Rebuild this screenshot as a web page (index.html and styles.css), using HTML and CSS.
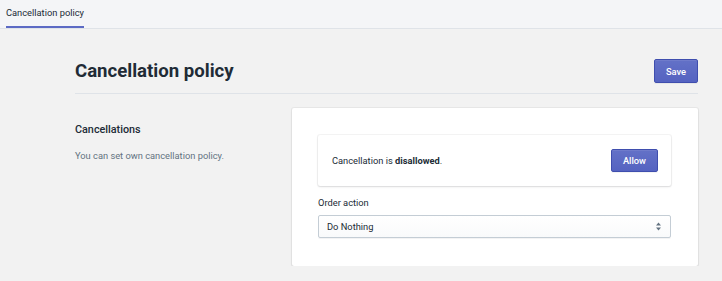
FILE: index.html
```html
<!DOCTYPE html>
<html lang="en">
<head>
    <meta charset="UTF-8">
    <title>Cancellation policy</title>
    <link rel="stylesheet" href="styles.css">
</head>
<body>
    <!-- Tabs -->
    <div class="tabs">
        <div class="tab active">Cancellation policy</div>
    </div>

    <div class="page">
        <!-- Page header -->
        <div class="page-header">
            <h1>Cancellation policy</h1>
            <button class="btn btn-primary">Save</button>
        </div>

        <!-- Annotated section -->
        <div class="section">
            <div class="annotation">
                <h2>Cancellations</h2>
                <p>You can set own cancellation policy.</p>
            </div>

            <div class="card">
                <div class="setting-toggle">
                    <span>Cancellation is <b>disallowed</b>.</span>
                    <button class="btn btn-primary">Allow</button>
                </div>

                <label class="field-label" for="action">Order action</label>
                <div class="select-wrap">
                    <select id="action">
                        <option>Do Nothing</option>
                    </select>
                    <svg class="select-arrows" width="7" height="9" viewBox="0 0 7 9">
                        <path d="M3.5 0.5 L6 3.5 H1 Z M3.5 8.5 L6 5.5 H1 Z" fill="#637381"/>
                    </svg>
                </div>
            </div>
        </div>
    </div>
</body>
</html>
```

FILE: styles.css
```css
* {
    margin: 0;
    padding: 0;
    box-sizing: border-box;
}

body {
    font-family: Roboto, "Noto Sans", sans-serif;
    background: #f2f2f2;
    color: #212b36;
    font-size: 9.3px;
}

/* Tabs */
.tabs {
    height: 29px;
    background: #f4f5f7;
    border-bottom: 1px solid #dfe3e8;
    padding-left: 6px;
    display: flex;
}

.tab {
    height: 28px;
    line-height: 25px;
    color: #212b36;
    border-bottom: 2px solid transparent;
}

.tab.active {
    border-bottom-color: #5c6ac4;
}

/* Page */
.page {
    padding: 30px 24px 0 75px;
}

.page-header {
    display: flex;
    justify-content: space-between;
    align-items: center;
    padding-bottom: 10px;
    border-bottom: 1px solid #dfe3e8;
}

.page-header h1 {
    font-size: 18.6px;
    font-weight: 700;
    line-height: 24px;
}

/* Buttons */
.btn {
    font-family: inherit;
    font-size: 9.3px;
    font-weight: 500;
    height: 24px;
    padding: 0 11px;
    border-radius: 2px;
    cursor: pointer;
}

.btn-primary {
    color: #fff;
    background: linear-gradient(#6371c7, #5563c1);
    border: 1px solid #3f4eae;
    box-shadow: inset 0 1px 0 0 #6f7bcb, 0 1px 0 0 rgba(22, 29, 37, 0.05);
}

/* Section */
.section {
    display: flex;
    padding-top: 14px;
}

.annotation {
    width: 217px;
    padding-top: 15px;
}

.annotation h2 {
    font-size: 10.8px;
    font-weight: 500;
    line-height: 14px;
}

.annotation p {
    margin-top: 12px;
    color: #637381;
    line-height: 14px;
}

.card {
    flex: 1;
    background: #fff;
    border-radius: 2px;
    box-shadow: 0 0 0 1px rgba(63, 63, 68, 0.05), 0 1px 2px 0 rgba(63, 63, 68, 0.15);
    padding: 27px 27px 28px 26px;
}

.setting-toggle {
    display: flex;
    justify-content: space-between;
    align-items: center;
    height: 51px;
    padding: 0 13px 0 14px;
    border-radius: 2px;
    box-shadow: 0 0 0 1px rgba(63, 63, 68, 0.05), 0 1px 2px 0 rgba(63, 63, 68, 0.15);
}

.setting-toggle .btn {
    height: 23px;
    padding: 0 11px;
}

.field-label {
    display: block;
    margin-top: 10px;
    line-height: 14px;
    margin-bottom: 5px;
}

.select-wrap {
    position: relative;
}

.select-wrap select {
    appearance: none;
    width: 100%;
    height: 23px;
    padding: 0 8px;
    font-family: inherit;
    font-size: 9.3px;
    color: #212b36;
    background: linear-gradient(#fff, #f9fafb);
    border: 1px solid #c4cdd5;
    border-radius: 2px;
    box-shadow: 0 1px 0 0 rgba(22, 29, 37, 0.05);
}

.select-arrows {
    position: absolute;
    right: 9px;
    top: 7px;
    pointer-events: none;
}
```
